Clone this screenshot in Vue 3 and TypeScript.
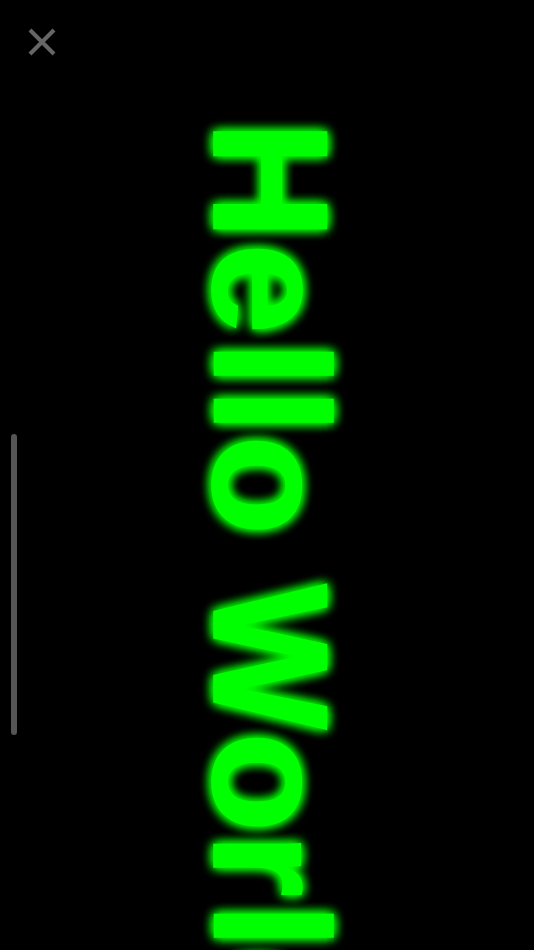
<script setup lang="ts">
interface Glyph {
  char: string
  spacing: number
  scale: number
}

const glyphs: Glyph[] = [
  { char: 'H', spacing: 4, scale: 1 },
  { char: 'e', spacing: 6.2, scale: 1 },
  { char: 'l', spacing: 2, scale: 1 },
  { char: 'l', spacing: 1.1, scale: 1 },
  { char: 'o', spacing: 1.5, scale: 1 },
  { char: ' ', spacing: 1.5, scale: 1 },
  { char: 'W', spacing: -6.4, scale: 0.94 },
  { char: 'o', spacing: 0.2, scale: 1 },
  { char: 'r', spacing: 6.6, scale: 1 },
  { char: 'l', spacing: 0, scale: 1 },
  { char: 'd', spacing: 0, scale: 1 },
]
</script>

<template>
  <main class="screen">
    <button class="close" type="button" aria-label="Close">
      <svg width="30" height="30" viewBox="0 0 30 30" aria-hidden="true">
        <path d="M3 3 L27 27 M27 3 L3 27" stroke="#666" stroke-width="4" fill="none" />
      </svg>
    </button>
    <div class="scroll-thumb"></div>
    <h1 class="banner"><span
      v-for="(glyph, index) in glyphs"
      :key="index"
      class="glyph"
      :style="{ letterSpacing: glyph.spacing + 'px', transform: 'scaleY(' + glyph.scale + ')' }"
    >{{ glyph.char }}</span></h1>
  </main>
</template>

<style>
html, body { margin: 0; background: #000; overflow: hidden; }
</style>

<style scoped>
.screen {
  position: relative;
  width: 534px;
  height: 950px;
  overflow: hidden;
  background: #000;
  display: flex;
  justify-content: center;
  align-items: flex-start;
  padding: 121px 0 0 6px;
  box-sizing: border-box;
}
.close {
  position: absolute;
  left: 27px;
  top: 27px;
  width: 30px;
  height: 30px;
  padding: 0;
  border: 0;
  background: none;
}
.close svg { display: block; }
.scroll-thumb {
  position: absolute;
  left: 10.5px;
  top: 434px;
  width: 6.5px;
  height: 301px;
  border-radius: 3.25px;
  background: #555;
}
.banner {
  margin: 0;
  writing-mode: vertical-rl;
  white-space: pre;
  font-family: "Liberation Sans", Arial, sans-serif;
  font-weight: 700;
  font-size: 164px;
  line-height: 1;
  color: #00ff00;
  -webkit-text-stroke: 1.5px #00ff00;
  text-shadow: 0 0 12px #00ff00, 0 0 12px #00ff00, 0 0 12px #00ff00;
}
.glyph {
  display: inline-block;
  transform-origin: top center;
}
</style>
